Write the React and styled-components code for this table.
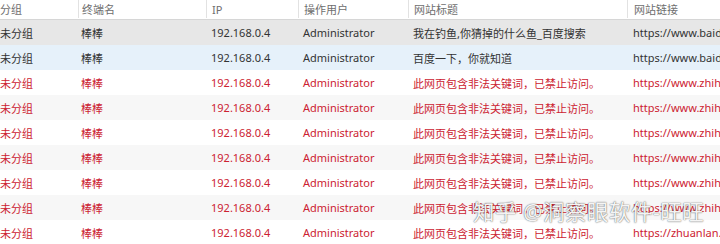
import React from "react";
import styled, { createGlobalStyle } from "styled-components";

const Global = createGlobalStyle`
  html, body {
    margin: 0;
    padding: 0;
    background: #ffffff;
  }
  body {
    font-family: "Noto Sans", "Noto Sans CJK SC", sans-serif;
    overflow: hidden;
  }
`;

const cols = "78px 128px 92px 110px 219px 1fr";

const Table = styled.div`
  position: relative;
  width: 720px;
  height: 244px;
  overflow: hidden;
  background: #ffffff;
`;

const HeaderRow = styled.div`
  display: grid;
  grid-template-columns: ${cols};
  height: 20px;
  border-bottom: 1px solid #d6d6d6;
  box-sizing: border-box;
`;

const HeaderCell = styled.div`
  display: flex;
  align-items: center;
  padding-left: ${(p) => p.$pad}px;
  border-left: ${(p) => (p.$first ? "none" : "1px solid #e2e2e2")};
  height: 18px;
  font-size: 11px;
  color: #6e6e6e;
  white-space: nowrap;
  overflow: hidden;
`;

const Row = styled.div`
  display: grid;
  grid-template-columns: ${cols};
  height: 25px;
  background: ${(p) => p.$bg};
  color: ${(p) => (p.$blocked ? "#cc2231" : "#333333")};
`;

const Cell = styled.div`
  display: flex;
  align-items: center;
  padding-left: ${(p) => p.$pad}px;
  font-size: 11px;
  white-space: nowrap;
  overflow: hidden;
`;

const Watermark = styled.div`
  position: absolute;
  left: 473px;
  top: 195px;
  font-size: 21.5px;
  letter-spacing: 0.5px;
  color: rgba(255, 255, 255, 0.95);
  text-shadow: 0 0 1px rgba(0, 0, 0, 0.6), 0 0 2px rgba(0, 0, 0, 0.3);
  white-space: nowrap;
  pointer-events: none;
`;

const headers = ["分组", "终端名", "IP", "操作用户", "网站标题", "网站链接"];
const pads = [0, 3, 5, 5, 5, 6];

const blocked = "此网页包含非法关键词，已禁止访问。";

const rows = [
  { title: "我在钓鱼,你猜掉的什么鱼_百度搜索", url: "https://www.baidu.com/s?wd", bg: "#e7e7e7" },
  { title: "百度一下，你就知道", url: "https://www.baidu.com/", bg: "#e6f1fa" },
  { title: blocked, url: "https://www.zhihu.com/", bg: "#ffffff", bad: true },
  { title: blocked, url: "https://www.zhihu.com/", bg: "#f7f7f7", bad: true },
  { title: blocked, url: "https://www.zhihu.com/", bg: "#ffffff", bad: true },
  { title: blocked, url: "https://www.zhihu.com/", bg: "#f7f7f7", bad: true },
  { title: blocked, url: "https://www.zhihu.com/", bg: "#ffffff", bad: true },
  { title: blocked, url: "https://www.zhihu.com/", bg: "#f7f7f7", bad: true },
  { title: blocked, url: "https://zhuanlan.zhihu.com/", bg: "#ffffff", bad: true },
];

export default function App() {
  return (
    <>
      <Global />
      <Table>
        <HeaderRow>
          {headers.map((h, i) => (
            <HeaderCell key={h} $pad={pads[i]} $first={i === 0}>
              {h}
            </HeaderCell>
          ))}
        </HeaderRow>
        {rows.map((r, i) => (
          <Row key={i} $bg={r.bg} $blocked={r.bad}>
            <Cell $pad={pads[0]}>未分组</Cell>
            <Cell $pad={pads[1]}>棒棒</Cell>
            <Cell $pad={pads[2]}>192.168.0.4</Cell>
            <Cell $pad={pads[3]}>Administrator</Cell>
            <Cell $pad={pads[4]}>{r.title}</Cell>
            <Cell $pad={pads[5]}>{r.url}</Cell>
          </Row>
        ))}
        <Watermark>知乎 @洞察眼软件-旺旺</Watermark>
      </Table>
    </>
  );
}
